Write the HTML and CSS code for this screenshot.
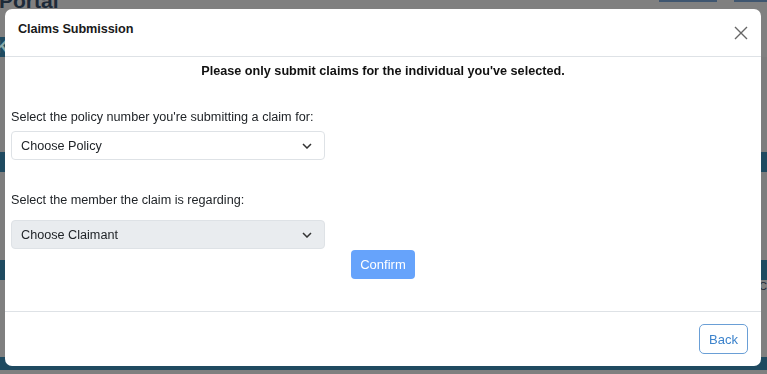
FILE: index.html
```html
<!DOCTYPE html>
<html lang="en">
<head>
<meta charset="utf-8">
<title>Claims Submission</title>
<link rel="stylesheet" href="styles.css">
</head>
<body>
<div class="page">
  <div class="topbar">
    <span class="brand">Portal</span>
    <div class="tabs"><span class="tab tab-a"></span><span class="tab tab-b"></span></div>
  </div>
  <div class="band band-1"><span class="band-letter">K</span></div>
  <div class="gap g1"></div>
  <div class="band band-2"></div>
  <div class="gap g2"></div>
  <div class="band band-3"></div>
  <div class="trail"><span>Ce</span></div>
  <div class="gap g3"></div>
  <div class="band band-4"></div>
</div>

<div class="modal">
  <div class="modal-header">
    <h5 class="modal-title">Claims Submission</h5>
    <button class="close" type="button" aria-label="Close">
      <svg width="14" height="14" viewBox="0 0 14 14"><path d="M1 1L13 13M13 1L1 13" stroke="#666" stroke-width="1.4" fill="none"/></svg>
    </button>
  </div>
  <div class="modal-body">
    <p class="notice">Please only submit claims for the individual you've selected.</p>
    <label class="label l1">Select the policy number you're submitting a claim for:</label>
    <div class="select">
      <span>Choose Policy</span>
      <svg class="chev" width="10" height="6" viewBox="0 0 10 6"><path d="M1 1L5 5L9 1" stroke="#333" stroke-width="1.5" fill="none"/></svg>
    </div>
    <label class="label l2">Select the member the claim is regarding:</label>
    <div class="select disabled">
      <span>Choose Claimant</span>
      <svg class="chev" width="10" height="6" viewBox="0 0 10 6"><path d="M1 1L5 5L9 1" stroke="#333" stroke-width="1.5" fill="none"/></svg>
    </div>
    <div class="confirm-row"><button class="btn-confirm" type="button">Confirm</button></div>
  </div>
  <div class="modal-footer">
    <button class="btn-back" type="button">Back</button>
  </div>
</div>
</body>
</html>
```

FILE: styles.css
```css
* { box-sizing: border-box; }
html, body { margin: 0; padding: 0; }
body {
  width: 767px;
  height: 374px;
  overflow: hidden;
  background: #808080;
  font-family: "Liberation Sans", Arial, sans-serif;
  color: #212529;
}
.page {
  display: flex;
  flex-direction: column;
  height: 374px;
}
.topbar {
  height: 37px;
  display: flex;
  justify-content: space-between;
  align-items: flex-start;
}
.brand {
  font-size: 21px;
  font-weight: bold;
  color: #1d2a38;
  line-height: 20px;
  margin-top: -9px;
  margin-left: -1px;
}
.tabs { display: flex; gap: 17px; }
.tab { display: block; height: 2px; background: #3f5670; }
.tab-a { width: 58px; }
.tab-b { width: 33px; }
.band { background: #1f4a60; height: 20px; }
.band-1 { width: 6px; color: #8aa; font-size: 18px; line-height: 20px; overflow: hidden; }
.band-letter { margin-left: -4px; font-weight: bold; }
.g1 { height: 95px; background: #7d7d7d; }
.g2 { height: 88px; background: #7d7d7d; }
.trail { height: 13px; display: flex; justify-content: flex-end; font-size: 11px; color: #1d2a38; line-height: 13px; }
.trail span { margin-right: -6px; }
.g3 { height: 64px; }
.band-4 { height: 13px; }

.modal {
  position: fixed;
  left: 5px;
  top: 9px;
  width: 756px;
  height: 357px;
  background: #fff;
  border-radius: 7px;
  display: flex;
  flex-direction: column;
}
.modal-header {
  height: 48px;
  border-bottom: 1px solid #dee2e6;
  display: flex;
  justify-content: space-between;
  align-items: flex-start;
  padding: 12px 13px 0 13px;
}
.modal-title {
  margin: 0;
  font-size: 12.7px;
  font-weight: bold;
  line-height: 16px;
  color: #1a1a1a;
  letter-spacing: -0.1px;
}
.close {
  border: 0;
  background: none;
  padding: 0;
  margin-top: 5px;
  width: 14px;
  height: 14px;
  display: flex;
}
.modal-body {
  flex: 1;
  padding: 6px 6px 0 6px;
  display: flex;
  flex-direction: column;
  align-items: flex-start;
}
.notice {
  margin: 0;
  align-self: stretch;
  text-align: center;
  font-size: 12.65px;
  font-weight: bold;
  line-height: 16px;
  color: #111;
}
.label {
  font-size: 12.65px;
  line-height: 16px;
  color: #212529;
}
.l1 { margin-top: 30px; margin-bottom: 6px; }
.l2 { margin-top: 32px; margin-bottom: 12px; }
.select {
  width: 314px;
  height: 29px;
  border: 1px solid #dee2e6;
  border-radius: 4px;
  background: #fff;
  display: flex;
  align-items: center;
  justify-content: space-between;
  padding: 0 12px 0 9px;
  font-size: 12.65px;
  color: #212529;
}
.select.disabled { background: #e9ecef; }
.chev { display: block; }
.confirm-row {
  align-self: stretch;
  display: flex;
  justify-content: center;
  margin-top: 1px;
}
.btn-confirm {
  width: 64px;
  height: 29px;
  border: 0;
  border-radius: 4px;
  background: #66a3fb;
  color: #fff;
  font-family: inherit;
  font-size: 13px;
  padding: 0;
}
.modal-footer {
  height: 55px;
  border-top: 1px solid #dee2e6;
  display: flex;
  justify-content: flex-end;
  align-items: flex-start;
  padding: 12px 13px 0 0;
}
.btn-back {
  width: 49px;
  height: 30px;
  border: 1px solid #6a9fd6;
  border-radius: 5px;
  background: #fff;
  color: #3c83cc;
  font-family: inherit;
  font-size: 13px;
  padding: 0;
}
```
